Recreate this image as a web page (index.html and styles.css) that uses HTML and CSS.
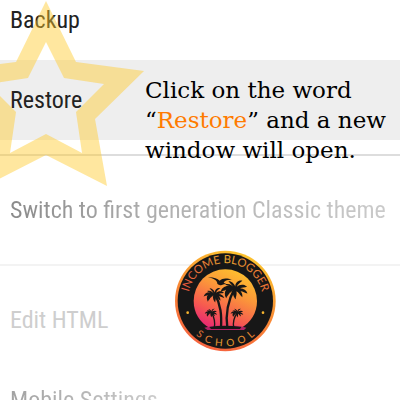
FILE: index.html
```
<!DOCTYPE html>
<html lang="en">
<head>
    <meta charset="UTF-8">
    <meta name="viewport" content="width=device-width, initial-scale=1.0">
    <title>Restore theme</title>
    <link rel="stylesheet" href="styles.css">
</head>
<body>
    <main class="screen">
        <ul class="menu">
            <li><button class="item">Backup</button></li>
            <li><button class="item active">Restore</button></li>
            <li class="section"><button class="item faded">Switch to first generation Classic theme</button></li>
            <li class="section light"><button class="item pale">Edit HTML</button></li>
            <li><button class="item dim">Mobile Settings</button></li>
        </ul>

        <svg class="star" viewBox="-52 0 196 188" aria-hidden="true">
            <path fill-rule="evenodd" d="M46 1L76 62L144 71L95 119L107 186L46 155L-15 186L-3 119L-52 71L16 62Z M46 42L28 78L-12 84L16 112L10 153L46 134L82 153L76 112L104 84L64 78Z"/>
        </svg>

        <p class="note">Click on the word “<span class="word">Restore</span>” and a new window will open.</p>

        <svg class="logo" viewBox="0 0 330 330" role="img" aria-label="Income Blogger School">
            <defs>
                <linearGradient id="rim" x1="0.7" y1="0" x2="0.3" y2="1">
                    <stop offset="0" stop-color="#fcc62e"/>
                    <stop offset="0.5" stop-color="#f98a35"/>
                    <stop offset="1" stop-color="#f5603f"/>
                </linearGradient>
                <linearGradient id="sky" x1="0.8" y1="0" x2="0.3" y2="1">
                    <stop offset="0" stop-color="#fdc52c"/>
                    <stop offset="0.4" stop-color="#fb963a"/>
                    <stop offset="0.75" stop-color="#f65a50"/>
                    <stop offset="1" stop-color="#e92b70"/>
                </linearGradient>
                <linearGradient id="ink" gradientUnits="userSpaceOnUse" x1="40" y1="0" x2="290" y2="0">
                    <stop offset="0" stop-color="#e8553f"/>
                    <stop offset="0.5" stop-color="#e8a72e"/>
                    <stop offset="1" stop-color="#ef7436"/>
                </linearGradient>
                <path id="top-arc" d="M58 201A113 113 0 1 1 274 201"/>
                <path id="bottom-arc" d="M37 206A134 134 0 0 0 295 206"/>
                <g id="palm">
                    <path d="M-3 0C-6 -9 -16 -14 -27 -11C-23 -7 -19 -8 -15 -6C-27 -8 -37 -1 -39 10C-34 5 -29 8 -24 3C-29 10 -29 19 -24 27C-22 20 -17 19 -15 12L-5 4C-8 13 -4 24 2 30C2 22 6 18 4 8C10 10 13 19 20 24C21 16 18 11 15 8C22 8 27 13 34 14C31 6 24 0 14 0C20 -3 26 -1 33 -4C25 -12 12 -11 5 -4C7 -12 15 -16 20 -21C9 -23 0 -15 1 -5C-3 -14 -10 -20 -18 -20C-14 -13 -6 -9 -3 0Z"/>
                    <path class="vein" d="M0 1L-30 0M-1 2L-23 18M3 1L28 8M2 0L27 -7"/>
                </g>
            </defs>
            <circle cx="166" cy="168" r="151" fill="url(#rim)"/>
            <circle cx="166" cy="168" r="143" fill="#171717"/>
            <path fill="url(#sky)" d="M119 249C90 233 71 204 71 168A95 95 0 0 1 261 168C261 204 242 233 213 249Z"/>
            <path d="M103 248Q135 239 165 244Q204 239 229 248L222 255H112Z" fill="#b12266"/>
            <path d="M118 246Q164 239 214 246L210 252H123Z" fill="#171717"/>
            <g fill="none" stroke="#171717">
                <path stroke-width="7" d="M134 145C153 180 155 211 153 249"/>
                <path stroke-width="7" d="M195 128C172 170 166 207 172 249"/>
                <path stroke-width="4" d="M124 202Q137 223 133 248M202 202Q187 224 191 248"/>
            </g>
            <g fill="#171717">
                <use href="#palm" transform="translate(134 147) scale(0.85)"/>
                <use href="#palm" transform="translate(195 130) scale(1.1)"/>
                <use href="#palm" transform="translate(124 202) scale(0.5)"/>
                <use href="#palm" transform="translate(202 202) scale(0.52)"/>
                <path d="M114 97C129 96 142 100 149 107C158 99 171 99 187 105C175 103 164 107 161 113L169 117L162 118C155 122 147 121 142 116C142 107 132 100 114 97Z"/>
            </g>
            <circle cx="53" cy="203" r="4" fill="#f7b42f"/>
            <circle cx="279" cy="203" r="4" fill="#f7b42f"/>
            <text class="ring"><textPath href="#top-arc" startOffset="50%">INCOME BLOGGER</textPath></text>
            <text class="ring school"><textPath href="#bottom-arc" startOffset="52%">SCHOOL</textPath></text>
        </svg>
    </main>
</body>
</html>
```
FILE: styles.css
```
body {
    margin: 0;
    background: #ffffff;
}
.screen {
    position: relative;
    height: 100vh;
    overflow: hidden;
}
.menu {
    list-style: none;
    margin: -20px 0 0;
    padding: 0;
}
.item {
    display: block;
    width: 100%;
    height: 80px;
    padding: 0 10px;
    border: none;
    background: none;
    color: #222222;
    font-family: "Roboto Condensed", "Liberation Sans Narrow", Roboto, sans-serif;
    font-size: 24px;
    line-height: 32px;
    text-align: left;
    white-space: nowrap;
    cursor: pointer;
}
.active {
    background: #eeeeee;
}
.section {
    margin-top: 14px;
    padding-top: 14px;
    border-top: 2px solid #dddddd;
}
.light {
    border-top-color: #f3f3f3;
}
.faded {
    color: transparent;
    background: linear-gradient(to right, #888888, #b0b0b0 40%, #cccccc);
    background-clip: text;
}
.pale {
    color: #cecece;
}
.dim {
    color: transparent;
    background: linear-gradient(to right, #a0a0a0, #cccccc 40%);
    background-clip: text;
}
.star {
    position: absolute;
    top: 0;
    left: -52px;
    width: 196px;
    height: 188px;
    fill: rgba(255, 202, 42, 0.45);
    pointer-events: none;
}
.note {
    position: absolute;
    top: 75px;
    left: 145px;
    width: 250px;
    margin: 0;
    color: #000000;
    font-family: "DejaVu Serif", serif;
    font-size: 23px;
    line-height: 30px;
}
.word {
    color: #ff7b00;
}
.logo {
    position: absolute;
    top: 245px;
    left: 170px;
    width: 110px;
    height: 110px;
}
.vein {
    fill: none;
    stroke: #171717;
    stroke-width: 2px;
}
.ring {
    fill: url(#ink);
    font-family: Lato, sans-serif;
    font-size: 34px;
    font-weight: 400;
    text-anchor: middle;
}
.school {
    font-size: 30px;
    letter-spacing: 14px;
}
```
